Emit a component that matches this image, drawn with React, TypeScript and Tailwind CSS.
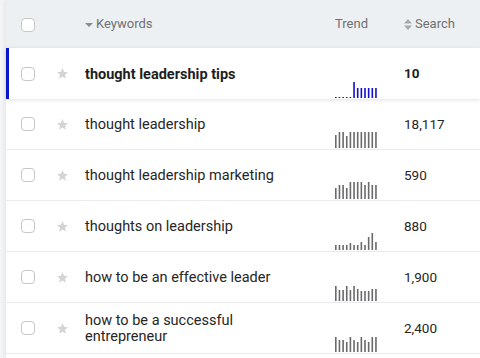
import React from 'react';

type Row = {
	keyword: string;
	volume: string;
	trend: number[];
	active?: boolean;
};

const ROWS: Row[] = [
	{
		keyword: 'thought leadership tips',
		volume: '10',
		trend: [1, 1, 1, 1, 1, 16, 10, 10, 10, 10, 10, 10],
		active: true,
	},
	{
		keyword: 'thought leadership',
		volume: '18,117',
		trend: [13, 16, 16, 12, 16, 16, 16, 16, 16, 16, 16, 16],
	},
	{
		keyword: 'thought leadership marketing',
		volume: '590',
		trend: [11, 14, 14, 11, 17, 17, 17, 17, 14, 17, 14, 14],
	},
	{
		keyword: 'thoughts on leadership',
		volume: '880',
		trend: [5, 5, 5, 5, 7, 5, 5, 8, 5, 13, 17, 8],
	},
	{
		keyword: 'how to be an effective leader',
		volume: '1,900',
		trend: [15, 11, 11, 15, 11, 15, 12, 10, 10, 10, 12, 12],
	},
	{
		keyword: 'how to be a successful entrepreneur',
		volume: '2,400',
		trend: [15, 12, 12, 10, 15, 12, 10, 15, 12, 10, 15, 15],
	},
];

function Checkbox() {
	return <span className="block w-[14px] h-[14px] rounded-[4px] border border-[#c6c6c6] bg-white" />;
}

function Star() {
	return (
		<svg width="13" height="13" viewBox="0 0 24 24" className="block">
			<path
				d="M12 2l2.9 6.9 7.1.6-5.4 4.7 1.7 7.3L12 17.6 5.7 21.5l1.7-7.3L2 9.5l7.1-.6z"
				fill="#d4d4d4"
			/>
		</svg>
	);
}

function Sparkline({ data, color }: { data: number[]; color: string }) {
	return (
		<svg width="44" height="20" viewBox="0 0 44 20" className="block">
			{data.map((h, i) => (
				<rect key={i} x={i * 3.65} y={20 - h} width="1.6" height={h} fill={color} />
			))}
		</svg>
	);
}

export default function App() {
	return (
		<div
			className="w-[480px] h-[358px] overflow-hidden bg-[#f4f5f6] pl-[6px]"
			style={{ fontFamily: 'Roboto, "Liberation Sans", sans-serif' }}
		>
			<div className="bg-white h-full shadow-[-2px_0_4px_rgba(0,0,0,0.06)]">
				{/* header */}
				<div className="flex items-center h-[48px] bg-[#edf0f3] text-[13px] text-[#707070]">
					<div className="w-[50px] pl-[15px] pt-[2px]">
						<Checkbox />
					</div>
					<div className="w-[29px]" />
					<div className="w-[250px] flex items-center gap-[3px]">
						<svg width="8" height="6" viewBox="0 0 8 6" className="mt-[2px]">
							<path d="M0 1h8L4 5z" fill="#8a8a8a" />
						</svg>
						<span>Keywords</span>
					</div>
					<div className="w-[69px]">Trend</div>
					<div className="flex items-center gap-[3px]">
						<svg width="8" height="11" viewBox="0 0 8 11">
							<path d="M4 0l4 4.5H0z M4 11L0 6.5h8z" fill="#a8a8a8" />
						</svg>
						<span>Search</span>
					</div>
				</div>

				{ROWS.map((r) => (
					<div
						key={r.keyword}
						className={
							r.active
								? 'relative flex items-center h-[51px] bg-white shadow-[0_1px_4px_rgba(0,0,0,0.12)] z-10'
								: 'relative flex items-center h-[51px] border-b border-[#e9ebee]'
						}
					>
						{r.active && <div className="absolute left-0 top-0 bottom-0 w-[3px] bg-[#0a14cc]" />}
						<div className="w-[50px] pl-[15px]">
							<Checkbox />
						</div>
						<div className="w-[29px]">
							<Star />
						</div>
						<div
							className={
								r.active
									? 'w-[250px] pr-[20px] pt-[2px] text-[14.5px] leading-[16px] font-bold text-[#1e1e1e]'
									: 'w-[250px] pr-[22px] pt-[2px] text-[14.5px] leading-[16px] text-[#262626]'
							}
						>
							{r.keyword}
						</div>
						<div className="w-[69px] self-end pb-[1px]">
							<Sparkline data={r.trend} color={r.active ? '#1010d0' : '#6a6a6a'} />
						</div>
						<div
							className={
								r.active
									? 'text-[13.5px] font-bold text-[#1e1e1e]'
									: 'text-[13.5px] text-[#262626]'
							}
						>
							{r.volume}
						</div>
					</div>
				))}
			</div>
		</div>
	);
}
